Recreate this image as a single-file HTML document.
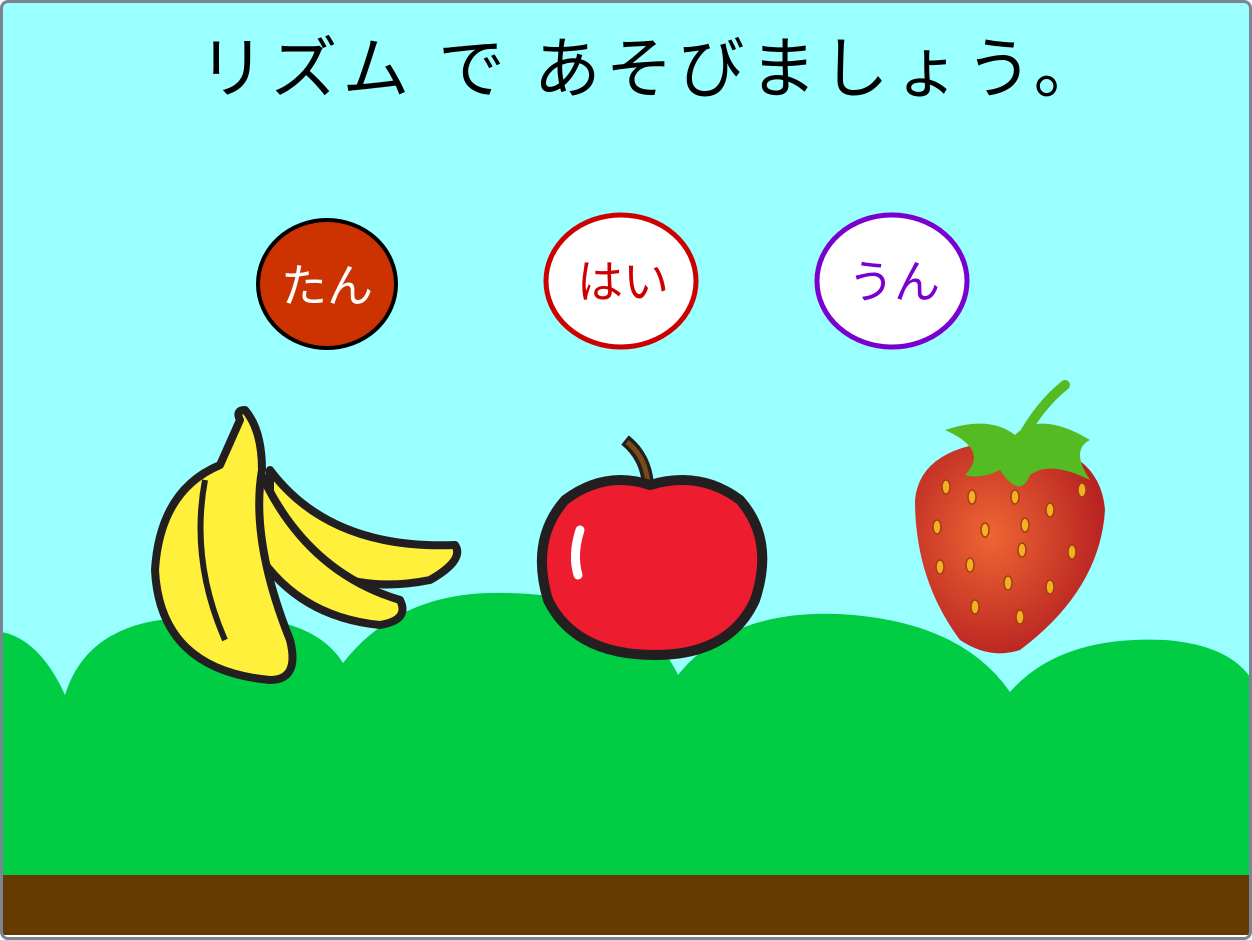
<!DOCTYPE html>
<html><head><meta charset="utf-8"><style>
html,body{margin:0;padding:0;background:#fff}
#f{position:absolute;left:0;top:0;width:1246px;height:934px;border:3px solid #7a8494;border-radius:8px;overflow:hidden;background:#99ffff}
</style></head><body>
<div id="f">
<svg width="1246" height="934" viewBox="3 3 1246 934" style="position:absolute;left:0;top:0" font-family="Liberation Sans, Noto Sans CJK JP, sans-serif">
<text x="652" y="92" text-anchor="middle" font-size="67" fill="#000" letter-spacing="5">リズム で あそびましょう。</text>
<path d="M2 632 Q40 640 65 695 Q90 615 200 618 Q310 610 343 663 Q400 590 505 593 Q640 595 678 675 Q730 610 838 614 Q960 620 1010 692 Q1060 635 1165 640 Q1230 645 1252 680 L1252 880 L2 880 Z" fill="#00cc44"/>
<rect x="2" y="875" width="1250" height="60" fill="#663a00"/>
<rect x="2" y="935" width="1250" height="3" fill="#fff"/>
<ellipse cx="327" cy="284" rx="69" ry="64" fill="#cc3300" stroke="#000" stroke-width="4"/>
<text x="327" y="302" text-anchor="middle" font-size="46" fill="#fff">たん</text>
<ellipse cx="621" cy="281" rx="75" ry="66" fill="#fff" stroke="#cc0000" stroke-width="5"/>
<text x="623" y="298" text-anchor="middle" font-size="46" fill="#cc0000">はい</text>
<ellipse cx="892" cy="281" rx="75" ry="66" fill="#fff" stroke="#7a00d0" stroke-width="5"/>
<text x="894" y="298" text-anchor="middle" font-size="46" fill="#7a00d0">うん</text>
<g stroke="#231f20" stroke-width="8" fill="#fff03c" stroke-linejoin="round">
<path d="M270 470 Q330 550 455 545 Q465 560 430 580 Q330 600 270 530 Z"/>
<path d="M255 460 Q300 570 400 600 Q410 620 380 625 Q280 615 240 520 Z"/>
<path d="M240 420 Q235 410 245 410 Q262 430 262 470 Q250 540 290 640 Q300 680 270 680 Q160 670 155 570 Q160 490 220 465 Z"/>
<path d="M205 480 Q190 560 225 640" fill="none" stroke-width="6"/>
</g>
<path d="M648 496 Q650 460 625 440" stroke="#231f20" stroke-width="12" fill="none"/>
<path d="M648 496 Q650 460 627 442" stroke="#7a4a16" stroke-width="5" fill="none"/>
<path d="M650 485 Q700 470 740 500 Q775 540 755 600 Q730 655 655 655 Q575 655 548 600 Q530 540 565 500 Q605 470 650 485 Z" fill="#ed1c2e" stroke="#231f20" stroke-width="10"/>
<path d="M580 530 Q572 555 578 575" stroke="#fff" stroke-width="9" stroke-linecap="round" fill="none"/>
<defs><radialGradient id="s" cx="0.4" cy="0.45" r="0.6"><stop offset="0" stop-color="#ee6633"/><stop offset="1" stop-color="#b82222"/></radialGradient></defs>
<path d="M1010 440 Q1100 445 1105 510 Q1100 590 1020 650 Q990 660 960 640 Q915 580 915 500 Q920 445 1010 440 Z" fill="url(#s)"/>
<path d="M945 430 Q990 415 1015 435 Q1040 410 1090 440 Q1070 450 1090 480 Q1050 460 1030 475 Q1020 500 1000 470 Q980 480 965 475 Q990 450 945 430 Z" fill="#55bb22"/>
<path d="M1022 438 Q1040 405 1065 385" stroke="#55bb22" stroke-width="10" fill="none" stroke-linecap="round"/>
<g fill="#f4b020" stroke="#a04010" stroke-width="1.5">
<ellipse cx="946" cy="487" rx="4" ry="7"/><ellipse cx="972" cy="497" rx="4" ry="7"/><ellipse cx="1015" cy="497" rx="4" ry="7"/><ellipse cx="1050" cy="510" rx="4" ry="7"/><ellipse cx="1082" cy="490" rx="4" ry="7"/>
<ellipse cx="937" cy="527" rx="4" ry="7"/><ellipse cx="985" cy="530" rx="4" ry="7"/><ellipse cx="1025" cy="525" rx="4" ry="7"/><ellipse cx="1072" cy="552" rx="4" ry="7"/>
<ellipse cx="940" cy="567" rx="4" ry="7"/><ellipse cx="970" cy="565" rx="4" ry="7"/><ellipse cx="1022" cy="550" rx="4" ry="7"/><ellipse cx="1050" cy="587" rx="4" ry="7"/>
<ellipse cx="1008" cy="583" rx="4" ry="7"/><ellipse cx="975" cy="607" rx="4" ry="7"/><ellipse cx="1020" cy="617" rx="4" ry="7"/>
</g>
</svg>
</div>
</body></html>
